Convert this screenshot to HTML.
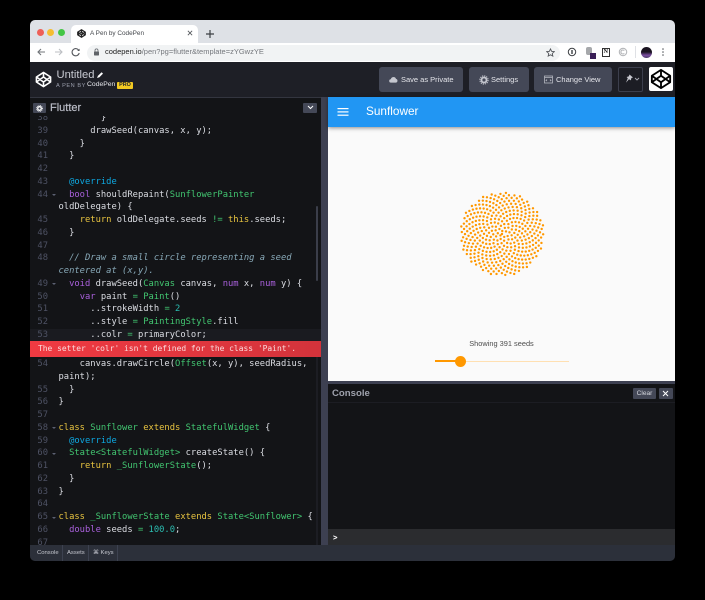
<!DOCTYPE html>
<html><head><meta charset="utf-8"><title>A Pen by CodePen</title>
<style>
html,body{margin:0;padding:0;background:#000;width:705px;height:600px;overflow:hidden}
body{font-family:"Liberation Sans",sans-serif;position:relative}
#all{position:absolute;left:0;top:0;width:705px;height:600px;filter:blur(.3px)}
.a{position:absolute}
#win{position:absolute;left:30px;top:20px;width:645px;height:541px;border-radius:5px;overflow:hidden;background:#131417}
.code{position:absolute;left:30px;top:115.5px;width:291px;height:429.5px;overflow:hidden;background:#131417}
.inner{position:absolute;left:0;top:-3.5px;width:100%}
.r{position:relative;height:12.75px;line-height:12.75px;font-family:"DejaVu Sans Mono","Liberation Mono",monospace;font-size:8.8px;color:#dcdee4;padding-left:28.5px;white-space:pre}
.r i{position:absolute;left:0;width:18px;text-align:right;font-style:normal;color:#4e5264}
.r.f:before{content:"";position:absolute;left:21.5px;top:5.5px;border-left:2.5px solid transparent;border-right:2.5px solid transparent;border-top:2.5px solid #5c6072}
.k{color:#e8c440}.t{color:#42c671}.p{color:#a960dc}.o{color:#0ea9e2}.c{color:#88a9b8;font-style:italic;font-family:"DejaVu Sans Mono",monospace}.n{color:#2bbcb0}.e{color:#42c671}
.err{position:relative;height:16px;margin-top:-.8px;margin-bottom:1.3px;line-height:16.5px;background:linear-gradient(90deg,#f03a42,#d3333b);color:#fbdcde;font-family:"DejaVu Sans Mono",monospace;font-size:7.95px;padding-left:8px;white-space:pre}
.btn{position:absolute;top:67px;height:25px;background:#444857;border-radius:3px;color:#e4e5ea;font-size:7.5px;line-height:25px;white-space:nowrap}
.btn span{position:absolute;top:0}
</style></head><body>
<div id="all">
<div id="win"></div>

<!-- tab strip -->
<div class="a" style="left:30px;top:20px;width:645px;height:23px;background:#dee1e6;border-radius:5px 5px 0 0"></div>
<div class="a" style="left:36.5px;top:28.5px;width:7px;height:7px;border-radius:50%;background:#ee5f57"></div>
<div class="a" style="left:47px;top:28.5px;width:7px;height:7px;border-radius:50%;background:#f5bd30"></div>
<div class="a" style="left:57.5px;top:28.5px;width:7px;height:7px;border-radius:50%;background:#43c645"></div>
<div class="a" style="left:71px;top:25px;width:127px;height:18px;background:#fff;border-radius:5px 5px 0 0"></div>
<svg class="a" style="left:77px;top:29px" width="9" height="9" viewBox="0 0 24 24" fill="none" stroke="#222" stroke-width="3.4" stroke-linejoin="round"><path d="M12 2 22 8.5V15.5L12 22 2 15.5V8.5ZM12 2V8.5M12 15.5V22M2 8.5 12 15.5 22 8.5M2 15.5 12 8.5 22 15.5"/></svg>
<div class="a" style="left:90px;top:28px;font-size:6.4px;line-height:11px;color:#45484d;white-space:nowrap">A Pen by CodePen</div>
<svg class="a" style="left:186.5px;top:30px" width="6" height="6" viewBox="0 0 7 7" stroke="#55585d" stroke-width="1"><path d="M1 1 6 6M6 1 1 6"/></svg>
<svg class="a" style="left:205px;top:28.5px" width="10" height="10" viewBox="0 0 10 10" stroke="#3c3f43" stroke-width="1.2"><path d="M5 1V9M1 5H9"/></svg>

<!-- toolbar -->
<div class="a" style="left:30px;top:43px;width:645px;height:19px;background:#fff"></div>
<svg class="a" style="left:36px;top:47px" width="46" height="10" viewBox="0 0 46 10" fill="none" stroke-width="1.1">
<path d="M9 5H2M5 2 2 5 5 8" stroke="#707478"/><path d="M19 5H26M23 2 26 5 23 8" stroke="#bcbfc3"/>
<path d="M42.8 3.4A3.6 3.6 0 1 0 43.2 6" stroke="#55585d"/><path d="M43.6 1.6V4H41.2Z" fill="#55585d" stroke="none"/></svg>
<div class="a" style="left:87px;top:44.5px;width:473px;height:16px;border-radius:8px;background:#f1f3f4"></div>
<svg class="a" style="left:93px;top:48px" width="7" height="8" viewBox="0 0 7 8"><rect x="1" y="3.5" width="5" height="4" rx=".6" fill="#5f6368"/><path d="M2 3.6V2.4a1.5 1.5 0 0 1 3 0V3.6" fill="none" stroke="#5f6368" stroke-width=".8"/></svg>
<div class="a" style="left:105px;top:47px;font-size:7.5px;line-height:10px;color:#75787d;white-space:nowrap"><span style="color:#222">codepen.io</span>/pen?pg=flutter&amp;template=zYGwzYE</div>
<svg class="a" style="left:546px;top:47.5px" width="9" height="9" viewBox="0 0 24 24" fill="none" stroke="#55585d" stroke-width="2.4"><path d="M12 2.5 15 9 22 9.8 16.8 14.6 18.2 21.5 12 18 5.8 21.5 7.2 14.6 2 9.8 9 9Z"/></svg>
<svg class="a" style="left:567px;top:47px" width="10" height="10" viewBox="0 0 10 10" fill="none" stroke="#3c3f43" stroke-width="1"><circle cx="5" cy="5" r="3.7"/><path d="M5 3V7" stroke-width="1.4"/></svg>
<div class="a" style="left:586px;top:47px;width:6px;height:8px;background:#a6a8ab;border-radius:2px"></div>
<div class="a" style="left:590px;top:53px;width:6px;height:6px;background:#3a1f57"></div>
<div class="a" style="left:601.5px;top:47.5px;width:6.5px;height:7px;border:1px solid #333;background:#fff;color:#111;font:bold 6px/7px 'Liberation Serif',serif;text-align:center">N</div>
<svg class="a" style="left:618px;top:47px" width="10" height="10" viewBox="0 0 10 10" fill="none" stroke="#b5b7ba" stroke-width="1.1"><circle cx="5" cy="5" r="3.7"/><path d="M6.3 3.6A2 2 0 1 0 6.3 6.4"/></svg>
<div class="a" style="left:634.5px;top:46px;width:1px;height:12px;background:#dfe1e5"></div>
<div class="a" style="left:641px;top:46.5px;width:11px;height:11px;border-radius:50%;background:linear-gradient(180deg,#1a1320 45%,#7a4ea0 75%,#4b3b68)"></div>
<svg class="a" style="left:661px;top:48px" width="4" height="9" viewBox="0 0 4 9" fill="#55585d"><circle cx="2" cy="1" r=".8"/><circle cx="2" cy="4" r=".8"/><circle cx="2" cy="7" r=".8"/></svg>

<!-- codepen header -->
<div class="a" style="left:30px;top:62px;width:645px;height:35px;background:#1e1f26"></div>
<svg class="a" style="left:34.5px;top:70.5px" width="17" height="17" viewBox="0 0 24 24" fill="none" stroke="#fff" stroke-width="2.2" stroke-linejoin="round"><path d="M12 2 22 8.5V15.5L12 22 2 15.5V8.5ZM12 2V8.5M12 15.5V22M2 8.5 12 15.5 22 8.5M2 15.5 12 8.5 22 15.5"/></svg>
<div class="a" style="left:56.5px;top:67.5px;font-size:11.2px;line-height:14px;color:#c9cbd3;white-space:nowrap">Untitled</div>
<svg class="a" style="left:96px;top:70.5px" width="8" height="8" viewBox="0 0 8 8"><path d="M1 7 2 4.8 5.6 1.2 7 2.6 3.4 6.2Z" fill="#fff"/></svg>
<div class="a" style="left:56px;top:82.5px;font-size:5.6px;line-height:7px;letter-spacing:.55px;color:#9a9dab;white-space:nowrap">A PEN BY</div>
<div class="a" style="left:87px;top:80px;font-size:6.8px;line-height:10px;color:#e4e5ea;white-space:nowrap">CodePen</div>
<div class="a" style="left:117px;top:82px;width:16px;height:7px;background:#f2c922;border-radius:1px;color:#1e1f26;font:bold 5.4px/7px 'Liberation Sans',sans-serif;text-align:center">PRO</div>

<div class="btn" style="left:379px;width:84px"><svg class="a" style="left:10px;top:9px" width="9" height="7" viewBox="0 0 9 7"><path d="M2 6.6A1.7 1.7 0 0 1 1.8 3.2 2.7 2.7 0 0 1 7 2.9 1.9 1.9 0 0 1 7 6.6Z" fill="#c5c7cf"/></svg><span style="left:22px">Save as Private</span></div>
<div class="btn" style="left:468.5px;width:60px"><svg class="a" style="left:10px;top:7.5px" width="10" height="10" viewBox="0 0 10 10"><circle cx="5" cy="5" r="2.5" fill="none" stroke="#c5c7cf" stroke-width="1.8"/><circle cx="5" cy="5" r="4.1" fill="none" stroke="#c5c7cf" stroke-width="1.1" stroke-dasharray="1.2 .95"/></svg><span style="left:22.5px">Settings</span></div>
<div class="btn" style="left:534px;width:78px"><svg class="a" style="left:10px;top:8px" width="9" height="9" viewBox="0 0 9 9" fill="none" stroke="#b5b7c0" stroke-width=".8"><rect x=".5" y="1" width="8" height="7"/><path d="M.5 2.6H8.5M3 4.5 2 5.3 3 6M6 4.5 7 5.3 6 6"/></svg><span style="left:22px">Change View</span></div>
<div class="a" style="left:617.5px;top:67px;width:23px;height:23px;border:1px solid #3c3f4d;background:#1c1d24;border-radius:2px"></div>
<svg class="a" style="left:624px;top:74px" width="17" height="10" viewBox="0 0 17 10"><path d="M5.5 .5 9 3.5 7.4 4 6.8 6.4 5 5.2 2 8.6 3.8 4.2 2.6 3 4.8 2.4Z" fill="#c8c9d0"/><path d="M11 4 13 6 15 4" fill="none" stroke="#a9abb5" stroke-width=".9"/></svg>
<div class="a" style="left:649px;top:67px;width:24px;height:24px;background:#fff;border-radius:2px"></div>
<svg class="a" style="left:650px;top:68px" width="22" height="22" viewBox="0 0 24 24" fill="none" stroke="#000" stroke-width="2" stroke-linejoin="round"><path d="M12 2 22 8.5V15.5L12 22 2 15.5V8.5ZM12 2V8.5M12 15.5V22M2 8.5 12 15.5 22 8.5M2 15.5 12 8.5 22 15.5"/></svg>

<!-- editor head -->
<div class="a" style="left:30px;top:97px;width:291px;height:18.5px;background:#131417;border-top:1.5px solid #33353f;box-sizing:border-box"></div>
<div class="a" style="left:33px;top:103px;width:13px;height:10px;background:#444857;border-radius:1px"></div>
<svg class="a" style="left:36px;top:104.5px" width="7" height="7" viewBox="0 0 7 7"><circle cx="3.5" cy="3.5" r="1.8" fill="none" stroke="#fff" stroke-width="1.3"/><circle cx="3.5" cy="3.5" r="3" fill="none" stroke="#fff" stroke-width=".8" stroke-dasharray=".8 .8"/></svg>
<div class="a" style="left:50px;top:102px;font-size:11px;line-height:13px;color:#b9bbc5;white-space:nowrap;-webkit-text-stroke:.2px #b9bbc5">Flutter</div>
<div class="a" style="left:303px;top:103px;width:14px;height:10px;background:#444857;border-radius:1px"></div>
<svg class="a" style="left:306.5px;top:105px" width="7" height="5" viewBox="0 0 7 5"><path d="M1 1 3.5 3.5 6 1" fill="none" stroke="#fff" stroke-width="1"/></svg>

<!-- code -->
<div class="code"><div class="inner">
<div class="r"><i>38</i>        }</div>
<div class="r"><i>39</i>      drawSeed(canvas, x, y);</div>
<div class="r"><i>40</i>    }</div>
<div class="r"><i>41</i>  }</div>
<div class="r"><i>42</i></div>
<div class="r"><i>43</i>  <span class="o">@override</span></div>
<div class="r f"><i>44</i>  <span class="p">bool</span> shouldRepaint(<span class="t">SunflowerPainter</span></div>
<div class="r">oldDelegate) {</div>
<div class="r"><i>45</i>    <span class="k">return</span> oldDelegate.seeds <span class="e">!=</span> <span class="k">this</span>.seeds;</div>
<div class="r"><i>46</i>  }</div>
<div class="r"><i>47</i></div>
<div class="r"><i>48</i>  <span class="c">// Draw a small circle representing a seed</span></div>
<div class="r"><span class="c">centered at (x,y).</span></div>
<div class="r f"><i>49</i>  <span class="p">void</span> drawSeed(<span class="t">Canvas</span> canvas, <span class="p">num</span> x, <span class="p">num</span> y) {</div>
<div class="r"><i>50</i>    <span class="p">var</span> paint <span class="e">=</span> <span class="t">Paint</span>()</div>
<div class="r"><i>51</i>      ..strokeWidth <span class="e">=</span> <span class="n">2</span></div>
<div class="r"><i>52</i>      ..style <span class="e">=</span> <span class="t">PaintingStyle</span>.fill</div>
<div class="r" style="background:#1a1b20"><i>53</i>      ..colr <span class="e">=</span> primaryColor;</div>
<div class="err">The setter 'colr' isn't defined for the class 'Paint'.</div>
<div class="r"><i>54</i>    canvas.drawCircle(<span class="t">Offset</span>(x, y), seedRadius,</div>
<div class="r">paint);</div>
<div class="r"><i>55</i>  }</div>
<div class="r"><i>56</i>}</div>
<div class="r"><i>57</i></div>
<div class="r f"><i>58</i><span class="k">class</span> <span class="t">Sunflower</span> <span class="k">extends</span> <span class="t">StatefulWidget</span> {</div>
<div class="r"><i>59</i>  <span class="o">@override</span></div>
<div class="r f"><i>60</i>  <span class="t">State&lt;StatefulWidget&gt;</span> createState() {</div>
<div class="r"><i>61</i>    <span class="k">return</span> <span class="t">_SunflowerState</span>();</div>
<div class="r"><i>62</i>  }</div>
<div class="r"><i>63</i>}</div>
<div class="r"><i>64</i></div>
<div class="r f"><i>65</i><span class="k">class</span> <span class="t">_SunflowerState</span> <span class="k">extends</span> <span class="t">State&lt;Sunflower&gt;</span> {</div>
<div class="r"><i>66</i>  <span class="p">double</span> seeds <span class="e">=</span> <span class="n">100.0</span>;</div>
<div class="r"><i>67</i></div>
</div></div>
<div class="a" style="left:315.5px;top:206px;width:2.5px;height:75px;background:#3b3e4a;border-radius:1px"></div>
<div class="a" style="left:315.5px;top:357px;width:2.5px;height:188px;background:#1c1d23"></div>

<!-- divider -->
<div class="a" style="left:321px;top:97px;width:7px;height:448px;background:#3d4051"></div>

<!-- preview -->
<div class="a" style="left:328px;top:97px;width:347px;height:285px;background:#fafafa"></div>
<div class="a" style="left:328px;top:97px;width:347px;height:29.5px;background:#2196f3;box-shadow:0 1px 4px rgba(0,0,0,.45)"></div>
<svg class="a" style="left:337px;top:107px" width="12" height="10" viewBox="0 0 12 10" fill="#fff"><rect x=".5" y="1" width="11" height="1.2"/><rect x=".5" y="4.3" width="11" height="1.2"/><rect x=".5" y="7.6" width="11" height="1.2"/></svg>
<div class="a" style="left:366px;top:104px;font-size:11.8px;line-height:15px;color:#fff;white-space:nowrap">Sunflower</div>
<svg id="sf" class="a" style="left:452px;top:183.5px" width="100" height="100" viewBox="-50 -50 100 100" fill="#ff9800"></svg>
<div class="a" style="left:428px;top:339px;width:147px;text-align:center;font-size:7.4px;line-height:10px;color:#4d4d4d;white-space:nowrap">Showing 391 seeds</div>
<div class="a" style="left:435px;top:361px;width:134px;height:1px;background:#ffe0b2"></div>
<div class="a" style="left:435px;top:360px;width:25px;height:2px;background:#ff9800"></div>
<div class="a" style="left:454.5px;top:355.5px;width:11px;height:11px;border-radius:50%;background:#ff9800"></div>

<!-- console -->
<div class="a" style="left:328px;top:381px;width:347px;height:2.5px;background:#3d4051"></div>
<div class="a" style="left:328px;top:383.5px;width:347px;height:145.5px;background:#131417"></div>
<div class="a" style="left:328px;top:402px;width:347px;height:1px;background:#1c1d23"></div>
<div class="a" style="left:332px;top:387px;font-size:9.6px;line-height:13px;font-weight:bold;color:#9fa2ad;white-space:nowrap">Console</div>
<div class="a" style="left:633px;top:388px;width:23px;height:11px;background:#444857;border-radius:1px;color:#d5d7de;font-size:6.6px;line-height:11px;text-align:center">Clear</div>
<div class="a" style="left:658.5px;top:388px;width:14px;height:11px;background:#444857;border-radius:1px"></div>
<svg class="a" style="left:662px;top:390px" width="7" height="7" viewBox="0 0 7 7" stroke="#fff" stroke-width="1"><path d="M1 1 6 6M6 1 1 6"/></svg>
<div class="a" style="left:328px;top:529px;width:347px;height:16px;background:#2b2c2f"></div>
<div class="a" style="left:333px;top:532px;font:bold 7.5px/11px 'DejaVu Sans Mono',monospace;color:#fff">&gt;</div>

<!-- bottom bar -->
<div class="a" style="left:30px;top:545px;width:645px;height:16px;background:#2c303a;border-radius:0 0 5px 5px"></div>
<div class="a" style="left:62px;top:545px;width:1px;height:16px;background:#3d4250"></div>
<div class="a" style="left:88px;top:545px;width:1px;height:16px;background:#3d4250"></div>
<div class="a" style="left:116.5px;top:545px;width:1px;height:16px;background:#3d4250"></div>
<div class="a" style="left:37px;top:548px;font-size:5.9px;line-height:11px;color:#c5c7cf;white-space:nowrap">Console</div>
<div class="a" style="left:67px;top:548px;font-size:5.9px;line-height:11px;color:#c5c7cf;white-space:nowrap">Assets</div>
<div class="a" style="left:93px;top:548px;font-size:5.9px;line-height:11px;color:#c5c7cf;white-space:nowrap">⌘ Keys</div>
</div>

<script>
(function(){
var s=document.getElementById('sf'),h='',phi=(Math.sqrt(5)+1)/2,tau=Math.PI*2;
for(var i=0;i<391;i++){
  var t=i*tau/phi,r=Math.sqrt(i)*2.12;
  h+='<circle cx="'+(Math.cos(t)*r).toFixed(2)+'" cy="'+(-Math.sin(t)*r).toFixed(2)+'" r="1.2"/>';
}
s.innerHTML=h;
})();
</script>
</body></html>
